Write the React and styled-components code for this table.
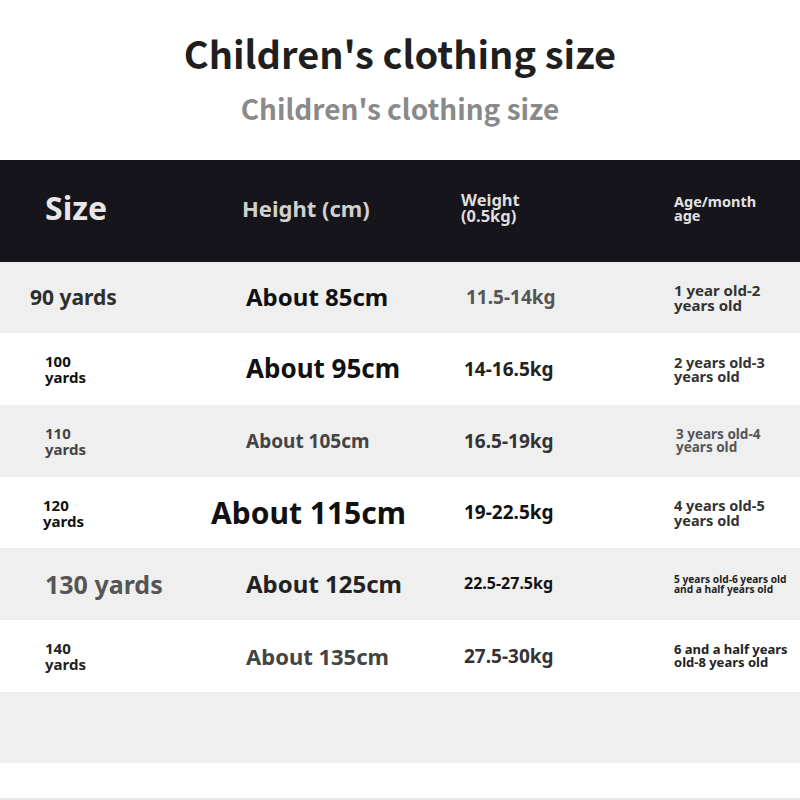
import React from 'react';
import styled, { createGlobalStyle } from 'styled-components';

const GlobalStyle = createGlobalStyle`
  html, body {
    margin: 0;
    padding: 0;
    background: #ffffff;
  }
  body {
    font-family: 'Noto Sans', 'DejaVu Sans', sans-serif;
  }
`;

const Page = styled.div`
  width: 800px;
  height: 800px;
  overflow: hidden;
  background: #ffffff;
  display: flex;
  flex-direction: column;
`;

const TitleBlock = styled.header`
  height: 160px;
  display: flex;
  flex-direction: column;
  align-items: center;
  box-sizing: border-box;
  padding-top: 28px;
  font-family: 'Noto Sans CJK SC', 'Noto Sans', sans-serif;
  font-weight: 700;
`;

const Title = styled.h1`
  margin: 0;
  font-size: 38px;
  line-height: 50px;
  color: #1f1f1f;
  font-weight: 700;
`;

const Subtitle = styled.h2`
  margin: 10px 0 0;
  font-size: 28px;
  line-height: 40px;
  color: #8a8a8a;
  font-weight: 700;
`;

const Row = styled.div`
  display: grid;
  grid-template-columns: 201px 218px 210px 1fr;
  align-items: center;
  box-sizing: border-box;
  padding-left: 45px;
  height: ${({ $h }) => $h}px;
  background: ${({ $bg }) => $bg};
`;

const HeaderRow = styled(Row)`
  background: #16151b;
  padding-bottom: 6px;
`;

const Cell = styled.div`
  font-weight: 700;
  font-size: ${({ $size }) => $size}px;
  line-height: ${({ $lh }) => ($lh ? `${$lh}px` : 1.2)};
  color: ${({ $color }) => $color};
  margin-left: ${({ $shift }) => $shift || 0}px;
  white-space: nowrap;
`;

const Footer = styled.div`
  flex: 1;
  border-bottom: 2px solid #e6e6e6;
`;

const header = [
  { text: 'Size', size: 32, color: '#e6e6e6' },
  { text: 'Height (cm)', size: 22, color: '#d0d0d0', shift: -4 },
  { text: ['Weight', '(0.5kg)'], size: 16.5, color: '#dedede', lh: 16.5, shift: -3 },
  { text: ['Age/month', 'age'], size: 14.5, color: '#e2e2e2', lh: 14.5 },
];

const rows = [
  [
    { text: '90 yards', size: 21, color: '#2e2e2e', shift: -15 },
    { text: 'About 85cm', size: 24, color: '#111111' },
    { text: '11.5-14kg', size: 19, color: '#555555', shift: 2 },
    { text: ['1 year old-2', 'years old'], size: 15, color: '#333333', lh: 15 },
  ],
  [
    { text: ['100', 'yards'], size: 15, color: '#111111', lh: 16 },
    { text: 'About 95cm', size: 26, color: '#111111' },
    { text: '14-16.5kg', size: 19, color: '#222222' },
    { text: ['2 years old-3', 'years old'], size: 14.5, color: '#333333', lh: 14.5 },
  ],
  [
    { text: ['110', 'yards'], size: 15, color: '#444444', lh: 16 },
    { text: 'About 105cm', size: 19, color: '#444444' },
    { text: '16.5-19kg', size: 19, color: '#333333' },
    { text: ['3 years old-4', 'years old'], size: 13.5, color: '#555555', lh: 13.5, shift: 2 },
  ],
  [
    { text: ['120', 'yards'], size: 15, color: '#111111', lh: 16, shift: -2 },
    { text: 'About 115cm', size: 30, color: '#111111', shift: -35 },
    { text: '19-22.5kg', size: 19, color: '#111111' },
    { text: ['4 years old-5', 'years old'], size: 14.5, color: '#333333', lh: 14.5 },
  ],
  [
    { text: '130 yards', size: 25, color: '#555555' },
    { text: 'About 125cm', size: 24, color: '#222222' },
    { text: '22.5-27.5kg', size: 16, color: '#111111' },
    { text: ['5 years old-6 years old', 'and a half years old'], size: 10.2, color: '#222222', lh: 10.5 },
  ],
  [
    { text: ['140', 'yards'], size: 15, color: '#222222', lh: 16 },
    { text: 'About 135cm', size: 22, color: '#444444' },
    { text: '27.5-30kg', size: 19, color: '#333333' },
    { text: ['6 and a half years', 'old-8 years old'], size: 13, color: '#222222', lh: 13.5 },
  ],
];

const rowHeights = [71, 72, 72, 71, 72, 72, 71];

const CellText = ({ cell }) => (
  <Cell $size={cell.size} $color={cell.color} $lh={cell.lh} $shift={cell.shift}>
    {Array.isArray(cell.text)
      ? cell.text.map((line) => <div key={line}>{line}</div>)
      : cell.text}
  </Cell>
);

const App = () => (
  <Page>
    <GlobalStyle />
    <TitleBlock>
      <Title>Children's clothing size</Title>
      <Subtitle>Children's clothing size</Subtitle>
    </TitleBlock>
    <HeaderRow $h={102}>
      {header.map((cell, i) => (
        <CellText key={i} cell={cell} />
      ))}
    </HeaderRow>
    {rows.map((row, r) => (
      <Row key={r} $h={rowHeights[r]} $bg={r % 2 === 0 ? '#efefef' : '#ffffff'}>
        {row.map((cell, i) => (
          <CellText key={i} cell={cell} />
        ))}
      </Row>
    ))}
    <Row $h={rowHeights[6]} $bg="#efefef" />
    <Footer />
  </Page>
);

export default App;
